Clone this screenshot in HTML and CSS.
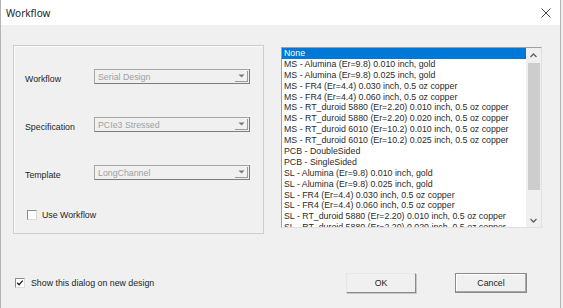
FILE: index.html
```html
<!DOCTYPE html>
<html lang="en">
<head>
    <meta charset="UTF-8">
    <title>Workflow</title>
    <link rel="stylesheet" href="styles.css">
</head>
<body>
    <div class="window">
        <div class="titlebar">
            <span class="title">Workflow</span>
            <svg class="close" width="10" height="10" viewBox="0 0 10 10">
                <path d="M0.5 0.5 L9.5 9.5 M9.5 0.5 L0.5 9.5" stroke="#444" stroke-width="1" fill="none"/>
            </svg>
        </div>

        <div class="content">
            <div class="main">
                <div class="group">
                    <div class="field">
                        <label>Workflow</label>
                        <div class="combo"><span class="value">Serial Design</span><span class="drop"><svg width="7" height="4" viewBox="0 0 7 4"><path d="M0.5 0.5 L6.5 0.5 L3.5 3.5 Z" fill="#777"/></svg></span></div>
                    </div>
                    <div class="field">
                        <label>Specification</label>
                        <div class="combo"><span class="value">PCIe3 Stressed</span><span class="drop"><svg width="7" height="4" viewBox="0 0 7 4"><path d="M0.5 0.5 L6.5 0.5 L3.5 3.5 Z" fill="#777"/></svg></span></div>
                    </div>
                    <div class="field">
                        <label>Template</label>
                        <div class="combo"><span class="value">LongChannel</span><span class="drop"><svg width="7" height="4" viewBox="0 0 7 4"><path d="M0.5 0.5 L6.5 0.5 L3.5 3.5 Z" fill="#777"/></svg></span></div>
                    </div>
                    <div class="check use-workflow">
                        <span class="box"></span>
                        <span>Use Workflow</span>
                    </div>
                </div>

                <div class="listbox">
                    <ul class="items">
                        <li class="selected">None</li>
                        <li>MS - Alumina (Er=9.8) 0.010 inch, gold</li>
                        <li>MS - Alumina (Er=9.8) 0.025 inch, gold</li>
                        <li>MS - FR4 (Er=4.4) 0.030 inch, 0.5 oz copper</li>
                        <li>MS - FR4 (Er=4.4) 0.060 inch, 0.5 oz copper</li>
                        <li>MS - RT_duroid 5880 (Er=2.20) 0.010 inch, 0.5 oz copper</li>
                        <li>MS - RT_duroid 5880 (Er=2.20) 0.020 inch, 0.5 oz copper</li>
                        <li>MS - RT_duroid 6010 (Er=10.2) 0.010 inch, 0.5 oz copper</li>
                        <li>MS - RT_duroid 6010 (Er=10.2) 0.025 inch, 0.5 oz copper</li>
                        <li>PCB - DoubleSided</li>
                        <li>PCB - SingleSided</li>
                        <li>SL - Alumina (Er=9.8) 0.010 inch, gold</li>
                        <li>SL - Alumina (Er=9.8) 0.025 inch, gold</li>
                        <li>SL - FR4 (Er=4.4) 0.030 inch, 0.5 oz copper</li>
                        <li>SL - FR4 (Er=4.4) 0.060 inch, 0.5 oz copper</li>
                        <li>SL - RT_duroid 5880 (Er=2.20) 0.010 inch, 0.5 oz copper</li>
                        <li>SL - RT_duroid 5880 (Er=2.20) 0.020 inch, 0.5 oz copper</li>
                        <li>SL - RT_duroid 6010 (Er=10.2) 0.010 inch, 0.5 oz copper</li>
                    </ul>
                    <div class="scrollbar">
                        <svg class="arrow" width="15" height="15" viewBox="0 0 15 15"><path d="M4.5 9 L7.5 6 L10.5 9" stroke="#606060" stroke-width="1.3" fill="none"/></svg>
                        <div class="track"><div class="thumb"></div></div>
                        <svg class="arrow" width="15" height="15" viewBox="0 0 15 15"><path d="M4.5 7 L7.5 10 L10.5 7" stroke="#606060" stroke-width="1.3" fill="none"/></svg>
                    </div>
                </div>
            </div>

            <div class="footer">
                <div class="check">
                    <span class="box"><svg width="8" height="8" viewBox="0 0 8 8"><path d="M1.2 3.8 L3 5.8 L6.8 1.6" stroke="#222" stroke-width="1.4" fill="none"/></svg></span>
                    <span>Show this dialog on new design</span>
                </div>
                <div class="buttons">
                    <button class="btn">OK</button>
                    <button class="btn default">Cancel</button>
                </div>
            </div>
        </div>
    </div>
</body>
</html>
```

FILE: styles.css
```css
body {
    margin: 0;
    width: 563px;
    height: 308px;
    overflow: hidden;
    background-color: #f0f0f0;
    font-family: "Liberation Sans", Arial, sans-serif;
    font-size: 8.8px;
    color: #1e1e1e;
}
.window {
    width: 561px;
    height: 308px;
    box-sizing: border-box;
    border-left: 1px solid #b4b4b4;
    border-right: 1px solid #b4b4b4;
    background-color: #f0f0f0;
}
.titlebar {
    height: 25px;
    background-color: #fff;
    display: flex;
    align-items: center;
    justify-content: space-between;
    padding: 0 9px 0 5px;
}
.title {
    font-family: "Noto Sans", sans-serif;
    font-size: 10px;
    color: #1e1e1e;
}
.content {
    padding: 20px 0 0 12px;
}
.main {
    display: flex;
    align-items: flex-start;
    gap: 17px;
}
.group {
    width: 251px;
    height: 189px;
    box-sizing: border-box;
    border: 1px solid #cdcdcd;
    box-shadow: inset 1px 1px 0 #fafafa;
    padding: 23px 0 0 11px;
}
.field {
    display: flex;
    align-items: center;
    height: 15px;
}
.field + .field {
    margin-top: 33px;
}
.field label {
    width: 69px;
    padding-top: 4px;
    color: #1e1e1e;
}
.combo {
    width: 156px;
    height: 15px;
    box-sizing: border-box;
    display: flex;
    align-items: center;
    justify-content: space-between;
    border: 1px solid #a8a8a8;
    border-right-color: #7c7c7c;
    border-bottom-color: #7c7c7c;
    background-color: #f0f0f0;
}
.combo .value {
    padding-left: 3px;
    color: #a0a0a0;
}
.drop {
    width: 13px;
    height: 11px;
    margin-right: 1px;
    display: flex;
    align-items: center;
    justify-content: center;
    border-right: 1px solid #9a9a9a;
    border-bottom: 1px solid #9a9a9a;
    box-sizing: border-box;
}
.check {
    display: flex;
    align-items: center;
    gap: 6px;
}
.check .box {
    width: 10px;
    height: 10px;
    box-sizing: border-box;
    display: flex;
    align-items: center;
    justify-content: center;
    background-color: #fff;
    border: 1px solid;
    border-color: #8c8c8c #dcdcdc #dcdcdc #8c8c8c;
}
.use-workflow {
    margin-top: 30px;
    margin-left: 2px;
    gap: 5px;
}
.listbox {
    margin-top: 2px;
    width: 261px;
    height: 181px;
    box-sizing: border-box;
    display: flex;
    background-color: #fff;
    border: 1px solid;
    border-color: #a0a0a0 #e0e0e0 #e0e0e0 #a0a0a0;
}
.items {
    flex: 1;
    margin: 0;
    padding: 0;
    list-style: none;
    overflow: hidden;
}
.items li {
    height: 10.9px;
    line-height: 10.9px;
    padding-left: 2px;
    white-space: nowrap;
    color: #2a2a2a;
}
.items li.selected {
    background-color: #0078d7;
    color: #fff;
}
.scrollbar {
    width: 15px;
    display: flex;
    flex-direction: column;
    background-color: #f0f0f0;
}
.arrow {
    display: block;
    flex: none;
}
.track {
    flex: 1;
}
.thumb {
    margin-left: 2px;
    width: 12px;
    height: 127px;
    background-color: #cdcdcd;
}
.footer {
    margin-top: 39px;
    padding-right: 33px;
    display: flex;
    align-items: center;
    justify-content: space-between;
}
.footer .check {
    margin-left: 2px;
}
.buttons {
    display: flex;
    gap: 39px;
}
.btn {
    width: 70px;
    height: 20px;
    padding: 0;
    font-family: "Liberation Sans", Arial, sans-serif;
    font-size: 8.8px;
    color: #1e1e1e;
    background-color: #f0f0f0;
    border: 1px solid;
    border-color: #e6e6e6 #8a8a8a #8a8a8a #e6e6e6;
    box-shadow: 1px 1px 0 #c8c8c8;
}
.btn.default {
    width: 72px;
    border-color: #8a8a8a;
    box-shadow: inset -1px -1px 0 #a8a8a8, inset 1px 1px 0 #fff;
}
```
